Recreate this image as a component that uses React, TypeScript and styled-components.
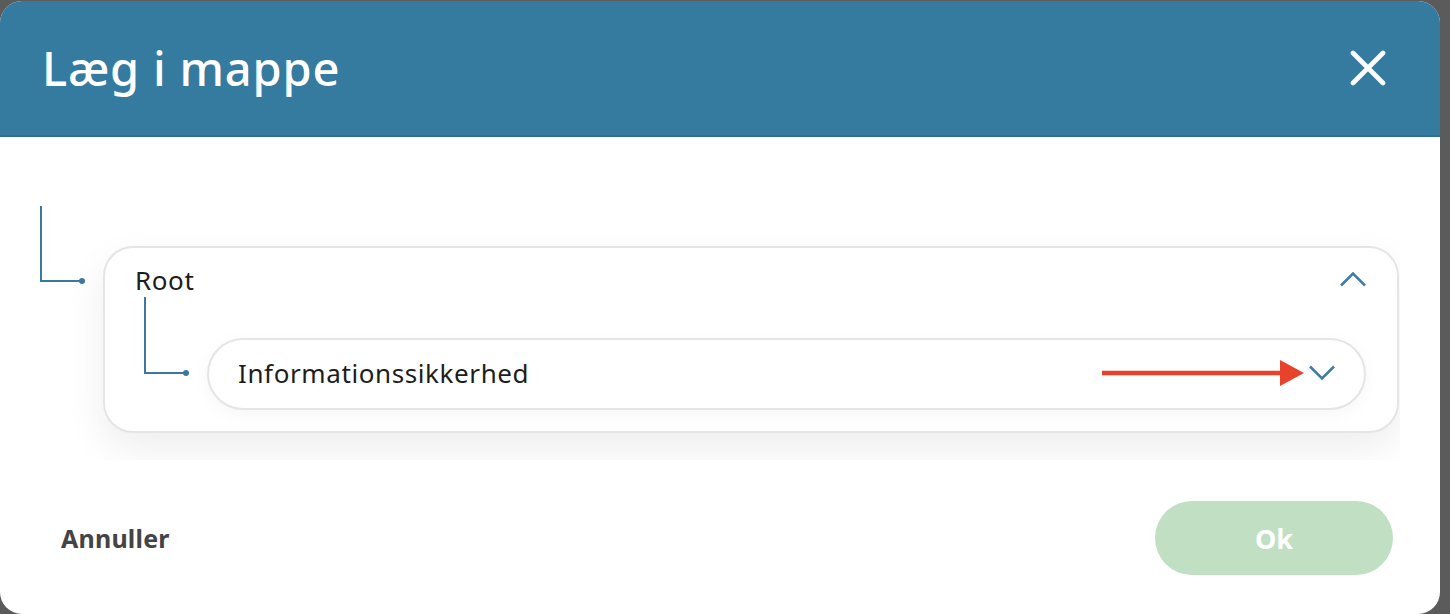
import React from 'react';
import styled, { createGlobalStyle } from 'styled-components';

const Global = createGlobalStyle`
  *, *::before, *::after { box-sizing: border-box; }
  html, body { margin: 0; padding: 0; background: #5b5b5b; }
  body { font-family: "Noto Sans", "Open Sans", sans-serif; }
`;

const Page = styled.div`
  width: 1450px;
  height: 614px;
  overflow: hidden;
  background: #5b5b5b;
  display: flex;
  align-items: flex-start;
`;

const Dialog = styled.div`
  width: 1440px;
  height: 613px;
  margin-top: 1px;
  background: #fff;
  border-radius: 22px;
  overflow: hidden;
  display: flex;
  flex-direction: column;
`;

const Header = styled.header`
  flex: none;
  height: 136px;
  background: #357a9f;
  border-bottom: 2px solid #2f6f92;
  display: flex;
  align-items: center;
  justify-content: space-between;
  padding: 0 54px 0 42px;
`;

const Title = styled.h1`
  margin: 0;
  font-family: "Noto Sans", sans-serif;
  font-weight: 500;
  font-size: 47px;
  color: #fff;
  letter-spacing: 0.8px;
`;

const CloseButton = styled.button`
  border: 0;
  background: none;
  padding: 0;
  width: 36px;
  height: 36px;
  display: flex;
  cursor: pointer;
`;

const Body = styled.div`
  flex: none;
  height: 323px;
  width: 1400px;
  overflow: hidden;
  padding-top: 69px;
`;

const NodeRow = styled.div<{ $indent: number }>`
  display: flex;
  align-items: flex-start;
  padding-left: ${(p) => p.$indent}px;
`;

const Elbow = styled.div<{ $height: number }>`
  position: relative;
  flex: none;
  width: 42px;
  height: ${(p) => p.$height}px;
  border-left: 2px solid #3b77a0;
  border-bottom: 2px solid #3b77a0;
  &::after {
    content: '';
    position: absolute;
    right: -3px;
    bottom: -4px;
    width: 6px;
    height: 6px;
    border-radius: 50%;
    background: #3b77a0;
  }
`;

const Card = styled.div<{ $offset: number; $radius: number }>`
  flex: 1;
  margin-left: 21px;
  margin-right: 1px;
  margin-top: ${(p) => p.$offset}px;
  background: #fff;
  border: 2px solid #e5e5e5;
  border-radius: ${(p) => p.$radius}px;
`;

const OuterCard = styled(Card)`
  padding: 13px 30px 21px 30px;
  box-shadow: 0 16px 40px rgba(0, 0, 0, 0.07);
`;

const InnerCard = styled(Card)`
  height: 72px;
  display: flex;
  align-items: center;
  padding: 0 28px 3px 29px;
  box-shadow: 0 4px 18px rgba(0, 0, 0, 0.04);
`;

const NodeHead = styled.div`
  height: 38px;
  display: flex;
  align-items: center;
  justify-content: space-between;
`;

const NodeLabel = styled.span`
  font-family: "Noto Sans", sans-serif;
  font-size: 26px;
  font-weight: 400;
  letter-spacing: 0.6px;
  color: #1d1d1d;
`;

const Children = styled.div`
  margin-top: -2px;
`;

const Toggle = styled.button<{ $shift?: number }>`
  border: 0;
  background: none;
  padding: 0;
  margin-top: ${(p) => p.$shift ?? 0}px;
  display: flex;
  cursor: pointer;
`;

const Annotation = styled.svg`
  margin-left: auto;
  margin-right: 4px;
  flex: none;
`;

const Footer = styled.footer`
  flex: 1;
  display: flex;
  align-items: flex-start;
  justify-content: space-between;
  padding: 41px 47px 0 61px;
`;

const CancelButton = styled.button`
  border: 0;
  background: none;
  padding: 0;
  margin-top: 20px;
  font-family: "Noto Sans", sans-serif;
  font-weight: 700;
  font-size: 25px;
  letter-spacing: 0.2px;
  color: #444;
  cursor: pointer;
`;

const OkButton = styled.button`
  width: 238px;
  height: 74px;
  border: 0;
  border-radius: 37px;
  background: #c1dfc2;
  color: #fff;
  font-family: "Noto Sans", sans-serif;
  font-weight: 700;
  font-size: 27px;
  cursor: pointer;
`;

const Chevron = ({ up }: { up?: boolean }) => (
  <svg width="28" height="16" viewBox="0 0 28 16" fill="none">
    <path
      d={up ? 'M2 14.5 L14 2.5 L26 14.5' : 'M2 1.5 L14 13.5 L26 1.5'}
      stroke="#3f7da4"
      strokeWidth="2.6"
      strokeLinecap="butt"
      strokeLinejoin="miter"
    />
  </svg>
);

export default function App() {
  return (
    <>
      <Global />
      <Page>
        <Dialog>
          <Header>
            <Title>Læg i mappe</Title>
            <CloseButton aria-label="Luk">
              <svg width="36" height="36" viewBox="0 0 36 36">
                <path d="M3 3 L33 33 M33 3 L3 33" stroke="#fff" strokeWidth="4.6" strokeLinecap="round" />
              </svg>
            </CloseButton>
          </Header>
          <Body>
            <NodeRow $indent={40}>
              <Elbow $height={76} />
              <OuterCard $offset={40} $radius={30}>
                <NodeHead>
                  <NodeLabel>Root</NodeLabel>
                  <Toggle aria-label="Skjul" $shift={-2}>
                    <Chevron up />
                  </Toggle>
                </NodeHead>
                <Children>
                  <NodeRow $indent={9}>
                    <Elbow $height={77} />
                    <InnerCard $offset={41} $radius={36}>
                      <NodeLabel>Informationssikkerhed</NodeLabel>
                      <Annotation width="202" height="26" viewBox="0 0 202 26">
                        <path d="M0 13 L182 13" stroke="#e8432a" strokeWidth="4.5" />
                        <polygon points="178,0 202,13 178,26" fill="#e8432a" />
                      </Annotation>
                      <Toggle aria-label="Udvid">
                        <Chevron />
                      </Toggle>
                    </InnerCard>
                  </NodeRow>
                </Children>
              </OuterCard>
            </NodeRow>
          </Body>
          <Footer>
            <CancelButton>Annuller</CancelButton>
            <OkButton>Ok</OkButton>
          </Footer>
        </Dialog>
      </Page>
    </>
  );
}
